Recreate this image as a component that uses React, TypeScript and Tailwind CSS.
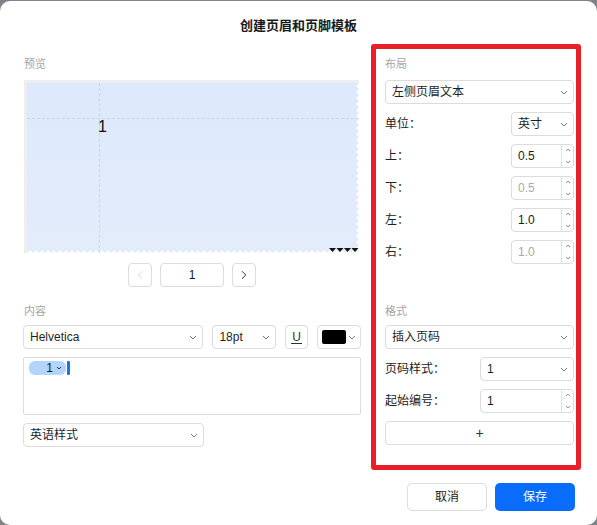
import React from 'react';
import { ChevronLeft, ChevronRight } from 'lucide-react';

const font = { fontFamily: '"Liberation Sans", "Noto Sans CJK SC", sans-serif' };

function Caret({ className = '' }: { className?: string }) {
  return (
    <svg width="8" height="5" viewBox="0 0 8 5" className={className}>
      <path d="M1 1 L4 4 L7 1" fill="none" stroke="#7a7a7a" strokeWidth="1" />
    </svg>
  );
}

function Label({ children, mb = 'mb-2' }: { children: React.ReactNode; mb?: string }) {
  return <div className={`text-[11px] leading-[16px] text-[#a6a6a6] ${mb}`}>{children}</div>;
}

function Select({ value, className = '' }: { value: string; className?: string }) {
  return (
    <div
      className={`flex h-6 items-center justify-between rounded-[4px] border border-[#dcdcdc] bg-white pl-[6px] pr-[5px] text-[12px] text-[#1f1f1f] ${className}`}
    >
      <span>{value}</span>
      <Caret />
    </div>
  );
}

function Spinner({ value, disabled, className = '' }: { value: string; disabled?: boolean; className?: string }) {
  return (
    <div className={`flex h-6 items-stretch rounded-[4px] border border-[#dcdcdc] bg-white text-[12px] ${className}`}>
      <div className={`flex flex-1 items-center pl-[6px] ${disabled ? 'text-[#a9a9a9]' : 'text-[#1a1a1a]'}`}>{value}</div>
      <div className="flex w-[12px] flex-col items-center justify-between border-l border-[#e2e2e2] py-[3px]">
        <svg width="6" height="4" viewBox="0 0 6 4">
          <path d="M1 3 L3 1 L5 3" fill="none" stroke="#8a8a8a" strokeWidth="0.9" />
        </svg>
        <svg width="6" height="4" viewBox="0 0 6 4">
          <path d="M1 1 L3 3 L5 1" fill="none" stroke="#8a8a8a" strokeWidth="0.9" />
        </svg>
      </div>
    </div>
  );
}

function Row({ label, children, last }: { label: string; children: React.ReactNode; last?: boolean }) {
  return (
    <div className={`flex h-6 items-center justify-between ${last ? '' : 'mb-2'}`}>
      <span className="text-[12px] text-[#222]">{label}</span>
      {children}
    </div>
  );
}

function Preview() {
  return (
    <div className="relative h-[173px] w-[335px] border-l-[3px] border-t-[3px] border-[#eeeeee] bg-gradient-to-b from-[#dde9fc] to-[#e3ecfb]">
      <div className="absolute bottom-0 left-[72px] top-0 border-l border-dashed border-[#c9d5e8]" />
      <div className="absolute left-0 right-0 top-[35px] border-t border-dashed border-[#c9d5e8]" />
      <div className="absolute left-[71px] top-[34px] text-[16px] leading-[20px] text-[#111]">1</div>
      {/* torn edges */}
      <svg className="absolute bottom-0 left-0" width="335" height="4" viewBox="0 0 335 4" preserveAspectRatio="none">
        <path
          d={'M0 4 ' + Array.from({ length: 56 }, (_, i) => `L${i * 6 + 3} 1 L${i * 6 + 6} 4`).join(' ')}
          fill="white"
        />
      </svg>
      <svg className="absolute right-0 top-0" width="4" height="173" viewBox="0 0 4 173">
        <path
          d={'M4 0 ' + Array.from({ length: 29 }, (_, i) => `L1 ${i * 6 + 3} L4 ${i * 6 + 6}`).join(' ')}
          fill="white"
        />
      </svg>
      <svg className="absolute bottom-0 right-0" width="30" height="5" viewBox="0 0 30 5">
        {[0, 1, 2, 3].map((i) => (
          <path key={i} d={`M${i * 7.5} 0 L${i * 7.5 + 7} 0 L${i * 7.5 + 3.5} 4 Z`} fill="#111" />
        ))}
      </svg>
    </div>
  );
}

export default function App() {
  return (
    <div className="h-[525px] w-[597px] bg-[#80838a] pt-[1px]" style={font}>
      <div className="h-[524px] w-full rounded-[10px] bg-white">
        <div className="pt-[16px] text-center text-[13px] font-bold leading-[18px] text-[#1a1a1a]">
          创建页眉和页脚模板
        </div>
        <div className="mt-[9px] flex pl-[23px]">
          {/* left column */}
          <div className="w-[338px] pt-3">
            <div className="pl-[1px]">
              <Label>预览</Label>
              <Preview />
            </div>
            <div className="mt-[10px] flex justify-center gap-2">
              <div className="flex h-6 w-6 items-center justify-center rounded-[4px] border border-[#dcdcdc]">
                <ChevronLeft size={14} strokeWidth={1.3} color="#cfcfcf" />
              </div>
              <div className="flex h-6 w-[64px] items-center justify-center rounded-[4px] border border-[#dcdcdc] text-[12px] text-[#1a1a1a]">
                1
              </div>
              <div className="flex h-6 w-6 items-center justify-center rounded-[4px] border border-[#dcdcdc]">
                <ChevronRight size={14} strokeWidth={1.6} color="#222" />
              </div>
            </div>
            <div className="mt-4 pl-[1px]">
              <Label mb="mb-[6px]">内容</Label>
            </div>
            <div className="flex gap-[9px]">
              <Select value="Helvetica" className="w-[181px]" />
              <Select value="18pt" className="w-[64px]" />
              <div className="flex h-6 w-[23px] items-center justify-center rounded-[4px] border border-[#dcdcdc]">
                <span className="border-b border-[#333] px-[1px] text-[12px] leading-[12px] text-[#333]">U</span>
              </div>
              <div className="flex h-6 w-[44px] items-center justify-between rounded-[4px] border border-[#dcdcdc] pl-[4px] pr-[4px]">
                <div className="h-[14px] w-[24px] rounded-[2px] bg-black" />
                <Caret />
              </div>
            </div>
            <div className="mt-2 flex h-[58px] items-start rounded-[2px] border border-[#dcdcdc] px-[5px] pt-[3px]">
              <div className="flex h-[14px] w-[37px] items-center justify-end gap-[3px] rounded-[6px] bg-[#b3d4fd] pr-[4px] text-[12px] text-[#1a1a1a]">
                <span className="leading-[14px]">1</span>
                <svg width="6" height="4" viewBox="0 0 6 4">
                  <path d="M1 1 L3 3 L5 1" fill="none" stroke="#333" strokeWidth="1" />
                </svg>
              </div>
              <div className="ml-[1px] h-[14px] w-[3px] rounded-[1px] bg-[#1a73e8]" />
            </div>
            <Select value="英语样式" className="mt-2 w-[181px]" />
          </div>
          {/* right column */}
          <div className="ml-[10px] h-[426px] w-[210px] rounded-[3px] border-[5px] border-[#e81f2a] pl-[9px] pr-[2px] pt-[7px]">
            <Label>布局</Label>
            <Select value="左侧页眉文本" className="mb-2" />
            <Row label="单位：">
              <Select value="英寸" className="w-[63px]" />
            </Row>
            <Row label="上：">
              <Spinner value="0.5" className="w-[63px]" />
            </Row>
            <Row label="下：">
              <Spinner value="0.5" disabled className="w-[63px]" />
            </Row>
            <Row label="左：">
              <Spinner value="1.0" className="w-[63px]" />
            </Row>
            <Row label="右：" last>
              <Spinner value="1.0" disabled className="w-[63px]" />
            </Row>
            <div className="mt-[39px]">
              <Label mb="mb-[6px]">格式</Label>
            </div>
            <Select value="插入页码" className="mb-2" />
            <Row label="页码样式：">
              <Select value="1" className="w-[94px]" />
            </Row>
            <Row label="起始编号：">
              <Spinner value="1" className="w-[94px]" />
            </Row>
            <div className="flex h-6 items-center justify-center rounded-[4px] border border-[#dcdcdc] text-[14px] text-[#333]">
              +
            </div>
          </div>
        </div>
        <div className="mt-[13px] flex justify-end gap-2 pr-[22px]">
          <div className="flex h-[28px] w-[80px] items-center justify-center rounded-[5px] border border-[#dcdcdc] text-[12px] text-[#1a1a1a]">
            取消
          </div>
          <div className="flex h-[28px] w-[80px] items-center justify-center rounded-[5px] bg-[#0a6cfb] text-[12px] text-white">
            保存
          </div>
        </div>
      </div>
    </div>
  );
}
